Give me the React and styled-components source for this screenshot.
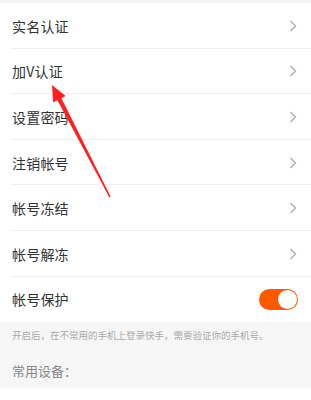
import React from 'react';
import styled, { createGlobalStyle } from 'styled-components';

const GlobalStyle = createGlobalStyle`
  html, body {
    margin: 0;
    padding: 0;
    background: #fff;
    font-family: "Noto Sans CJK SC", "Noto Sans", sans-serif;
  }
`;

const Page = styled.div`
  position: relative;
  width: 311px;
  height: 400px;
  overflow: hidden;
  background: #fff;
`;

const TopStrip = styled.div`
  height: 3px;
  background: #f4f4f4;
`;

const List = styled.div`
  display: flex;
  flex-direction: column;
`;

const Row = styled.div`
  height: 45.6px;
  box-sizing: border-box;
  display: flex;
  align-items: center;
  justify-content: space-between;
  padding: 0 14px 0 12px;
  position: relative;

  &::after {
    content: '';
    position: absolute;
    left: 10px;
    right: 0;
    bottom: 0;
    height: 1px;
    background: ${({ $last }) => ($last ? 'transparent' : '#f0f0f0')};
  }
`;

const Label = styled.span`
  font-size: 14px;
  color: #333;
  letter-spacing: 0.2px;
`;

const Toggle = styled.div`
  width: 39px;
  height: 21px;
  border-radius: 11px;
  background: #ff5a00;
  display: flex;
  align-items: center;
  justify-content: flex-end;
  padding: 1px;
  box-sizing: border-box;
  margin-right: -1px;
`;

const Knob = styled.div`
  width: 19px;
  height: 19px;
  border-radius: 50%;
  background: #fff;
`;

const Grey = styled.div`
  background: #f6f6f6;
  padding: 6px 12px 0;
  height: 66px;
  box-sizing: border-box;
`;

const Hint = styled.div`
  font-size: 9.5px;
  color: #aaa;
  line-height: 14px;
`;

const SubTitle = styled.div`
  margin-top: 19px;
  font-size: 13px;
  color: #888;
`;

const Arrow = styled.svg`
  position: absolute;
  left: 0;
  top: 0;
  pointer-events: none;
`;

const Chevron = () => (
  <svg width="8" height="12" viewBox="0 0 8 12">
    <path d="M1.5 1 L6.5 6 L1.5 11" fill="none" stroke="#a8a8a8" strokeWidth="1.2" />
  </svg>
);

const items = ['实名认证', '加V认证', '设置密码', '注销帐号', '帐号冻结', '帐号解冻'];

export default function App() {
  return (
    <Page>
      <GlobalStyle />
      <TopStrip />
      <List>
        {items.map((t) => (
          <Row key={t}>
            <Label>{t}</Label>
            <Chevron />
          </Row>
        ))}
        <Row $last>
          <Label>帐号保护</Label>
          <Toggle>
            <Knob />
          </Toggle>
        </Row>
      </List>
      <Grey>
        <Hint>开启后，在不常用的手机上登录快手，需要验证你的手机号。</Hint>
        <SubTitle>常用设备：</SubTitle>
      </Grey>
      <Arrow width="311" height="400" viewBox="0 0 311 400">
        <polygon
          points="52,85 65.6,96 61.4,98.2 110.7,196.7 109.3,197.3 57.4,100.2 53.2,102.4"
          fill="#ff1f1f"
        />
      </Arrow>
    </Page>
  );
}
